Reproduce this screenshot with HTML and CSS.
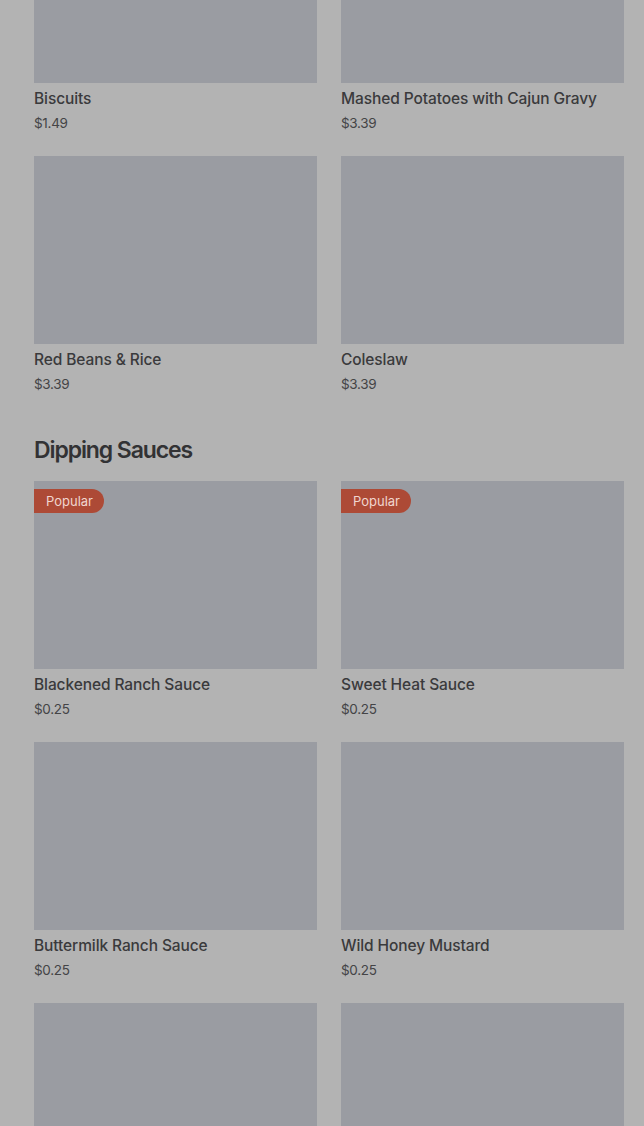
FILE: index.html
```html
<!DOCTYPE html>
<html>
<head>
<meta charset="utf-8">
<link rel="stylesheet" href="styles.css">
</head>
<body>
<main class="page">
  <section class="grid">
    <div class="card"><div class="img"></div><div class="name">Biscuits</div><div class="price">$1.49</div></div>
    <div class="card"><div class="img"></div><div class="name">Mashed Potatoes with Cajun Gravy</div><div class="price">$3.39</div></div>
    <div class="card"><div class="img"></div><div class="name">Red Beans &amp; Rice</div><div class="price">$3.39</div></div>
    <div class="card"><div class="img"></div><div class="name">Coleslaw</div><div class="price">$3.39</div></div>
  </section>
  <h2 class="heading">Dipping Sauces</h2>
  <section class="grid">
    <div class="card"><div class="img"><span class="badge">Popular</span></div><div class="name">Blackened Ranch Sauce</div><div class="price">$0.25</div></div>
    <div class="card"><div class="img"><span class="badge">Popular</span></div><div class="name">Sweet Heat Sauce</div><div class="price">$0.25</div></div>
    <div class="card"><div class="img"></div><div class="name">Buttermilk Ranch Sauce</div><div class="price">$0.25</div></div>
    <div class="card"><div class="img"></div><div class="name">Wild Honey Mustard</div><div class="price">$0.25</div></div>
    <div class="card"><div class="img"></div><div class="name">&nbsp;</div><div class="price">&nbsp;</div></div>
    <div class="card"><div class="img"></div><div class="name">&nbsp;</div><div class="price">&nbsp;</div></div>
  </section>
</main>
</body>
</html>
```
FILE: styles.css
```css
html, body {
  margin: 0;
  padding: 0;
  background: #b3b3b3;
  overflow: hidden;
}
body {
  font-family: Inter, "Noto Sans", sans-serif;
  color: #3b3b3d;
}
.page {
  margin-top: -105px;
  padding: 0 20px 0 34px;
}
.grid {
  display: grid;
  grid-template-columns: 283px 283px;
  column-gap: 24px;
  row-gap: 23px;
}
.card {
  display: flex;
  flex-direction: column;
}
.img {
  position: relative;
  height: 188px;
  background: #9a9ca2;
}
.name {
  margin-top: 5px;
  font-size: 15.5px;
  font-weight: 500;
  line-height: 22px;
  color: #3a3a3c;
  letter-spacing: -0.1px;
}
.price {
  margin-top: 3px;
  font-size: 13.5px;
  line-height: 20px;
  color: #444446;
  letter-spacing: -0.3px;
}
.heading {
  margin: 0;
  padding: 40px 0 15px;
  font-size: 23px;
  line-height: 32px;
  font-weight: 600;
  letter-spacing: -1.1px;
  color: #323234;
}
.badge {
  position: absolute;
  left: 0;
  top: 8px;
  height: 24px;
  line-height: 24px;
  padding: 0 11px 0 12px;
  background: #ad4a36;
  color: #f0d6cf;
  font-size: 13px;
  border-radius: 0 12px 12px 0;
}
```
